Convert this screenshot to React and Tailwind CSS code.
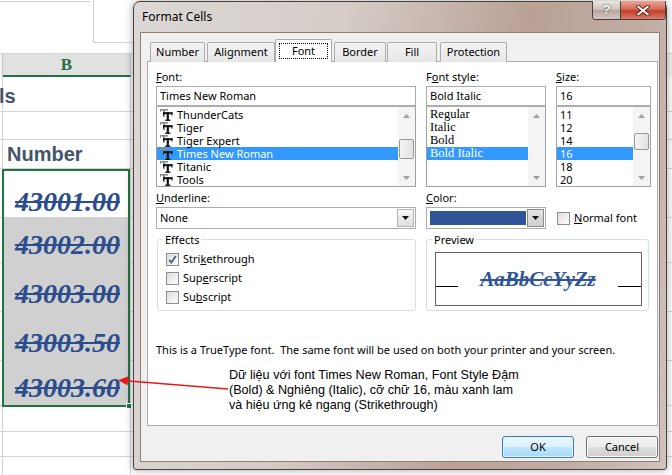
import React from 'react';

const UI = "font-['Noto_Sans',sans-serif] text-[11px] text-black";

//Small drawings
function TTIcon() {
    return (
        <svg width="13" height="12" viewBox="0 0 13 12" className="shrink-0">
            <g fill="#8c8c8c">
                <rect x="0" y="0" width="8" height="1.6" />
                <rect x="0" y="0" width="0.9" height="3" />
                <rect x="3.1" y="0" width="1.8" height="8" />
            </g>
            <g fill="#111">
                <rect x="3" y="3.2" width="9.5" height="2" />
                <rect x="3" y="3.2" width="1" height="3.4" />
                <rect x="11.5" y="3.2" width="1" height="3.4" />
                <rect x="6.7" y="3.2" width="2.2" height="8.2" />
                <rect x="5.2" y="10.6" width="5.2" height="1.3" />
            </g>
        </svg>
    );
}

function Tri({ up, color = "#a0a0a0" }) {
    return (
        <svg width="7" height="4" viewBox="0 0 7 4">
            <path d={up ? "M0 4 L3.5 0 L7 4 Z" : "M0 0 L3.5 4 L7 0 Z"} fill={color} />
        </svg>
    );
}

function ScrollBar({ children }) {
    return (
        <div className="w-[17px] shrink-0 h-full bg-[#f4f4f4] flex flex-col">
            <div className="h-[17px] flex items-center justify-center"><Tri up /></div>
            <div className="flex-1 flex flex-col items-center">{children}</div>
            <div className="h-[17px] flex items-center justify-center"><Tri /></div>
        </div>
    );
}

function Thumb({ className }) {
    return <div className={`w-[15px] rounded-[2px] border border-[#979797] bg-[linear-gradient(90deg,#f4f4f4,#e2e2e2)] ${className}`} />;
}

function DropBtn({ pressed }) {
    return (
        <div className={`w-[17px] h-[18px] mr-[1px] border flex items-center justify-center ${pressed ? "border-[#8a8a8a] bg-[linear-gradient(#e4e4e4,#cfcfcf)]" : "border-[#b5b5b5] bg-[linear-gradient(#f6f6f6,#dedede)]"}`}>
            <Tri color="#111" />
        </div>
    );
}

function Check({ checked }) {
    return (
        <div className="w-[13px] h-[13px] shrink-0 border border-[#8e8f8f] bg-[linear-gradient(135deg,#dcdcdc,#fdfdfd)] flex items-center justify-center">
            {checked && (
                <svg width="9" height="9" viewBox="0 0 9 9">
                    <path d="M1.2 4.8 L3.4 7.4 L7.8 1" stroke="#4a5e8e" strokeWidth="1.8" fill="none" />
                </svg>
            )}
        </div>
    );
}

//Spreadsheet behind the dialog
function Row({ h, fill = "", cls = "", children }) {
    return (
        <div className={`flex border-b border-[#d4d4d4] ${h}`}>
            <div className="w-[3px] shrink-0 border-r border-[#d4d4d4]" />
            <div className={`w-[128px] shrink-0 border-r border-[#d4d4d4] flex ${fill} ${cls}`}>{children}</div>
            <div className="flex-1" />
        </div>
    );
}

function Num({ children }) {
    return (
        <span className="font-['Liberation_Serif',serif] font-bold italic text-[28px] leading-[24px] line-through text-[#2c4d8d]">
            {children}
        </span>
    );
}

function Sheet() {
    return (
        <div className="w-[672px]">
            <div className="flex h-[53px]">
                <div className="w-[90px] h-[1px] mt-[1px] bg-[#d4d4d4]" />
                <div className="ml-[3px] w-[90px] h-[43px] border-l border-b border-[#d4d4d4]" />
            </div>
            <div className="flex h-[24px] border-t border-[#d4d4d4] bg-[#f3f3f3]">
                <div className="w-[3px] shrink-0 border-r border-[#c8c8c8]" />
                <div className="w-[128px] shrink-0 bg-[#e1e1e1] border-b-2 border-b-[#217346] border-r border-r-[#c8c8c8] flex items-center justify-center font-['Liberation_Serif',serif] font-bold text-[17px] text-[#217346]">
                    B
                </div>
            </div>
            <Row h="h-[35px]" cls="items-end pb-[4px]">
                <span className="-ml-[4px] font-['Liberation_Sans',sans-serif] font-bold text-[20px] leading-[22px] text-[#44546a]">ls</span>
            </Row>
            <Row h="h-[28px]" />
            <Row h="h-[29px]" cls="items-end pb-[3px] pl-[4px]">
                <span className="font-['Liberation_Sans',sans-serif] font-bold text-[20px] leading-[22px] text-[#44546a]">Number</span>
            </Row>
            <Row h="h-[49px]" cls="items-end justify-end pr-[10px] pb-[3px]"><Num>43001.00</Num></Row>
            <Row h="h-[45px]" fill="bg-[#d0d0d0]" cls="items-end justify-end pr-[10px] pb-[5px]"><Num>43002.00</Num></Row>
            <Row h="h-[49px]" fill="bg-[#d0d0d0]" cls="items-end justify-end pr-[10px] pb-[5px]"><Num>43003.00</Num></Row>
            <Row h="h-[49px]" fill="bg-[#d0d0d0]" cls="items-end justify-end pr-[10px] pb-[5px]"><Num>43003.50</Num></Row>
            <Row h="h-[45px]" fill="bg-[#d0d0d0]" cls="items-end justify-end pr-[10px] pb-[5px]"><Num>43003.60</Num></Row>
            <Row h="h-[26px]" />
            <Row h="h-[25px]" />
            <Row h="h-[25px]" />
        </div>
    );
}

//Format Cells dialog
function Tab({ w, children }) {
    return (
        <div className={`${w} h-[20px] border border-b-0 border-[#acacac] rounded-t-[2px] bg-[linear-gradient(#f4f4f4,#e6e6e6)] flex items-center justify-center`}>
            {children}
        </div>
    );
}

function Dialog() {
    const fonts = ["ThunderCats", "Tiger", "Tiger Expert", "Times New Roman", "Titanic", "Tools"];
    const styles = ["Regular", "Italic", "Bold", "Bold Italic"];
    const sizes = ["11", "12", "14", "16", "18", "20"];

    return (
        <div className={`absolute left-[133px] top-[1px] w-[534px] h-[469px] ${UI} rounded-t-[7px] rounded-b-[3px] border border-[#4a403c] bg-[linear-gradient(100deg,#dcd8d6_0%,#d5ccc7_35%,#b9a197_65%,#c2aea5_85%,#d0c3bc_100%)] shadow-[0_0_8px_rgba(0,0,0,0.35)] flex flex-col px-[6px] pb-[7px]`}>
            <div className="h-[30px] relative flex items-center pl-[2px]">
                <span className="text-[12px]">Format Cells</span>
                <div className="absolute -top-px -right-[6px] flex h-[19px] rounded-b-[4px] border border-t-0 border-[#4c3f3a] overflow-hidden">
                    <div className="w-[27px] bg-[linear-gradient(#ebe5e2,#cdc1bb_48%,#b5a59e_52%,#d3c7c1)] flex items-center justify-center font-['Liberation_Sans',sans-serif] font-bold text-[13px] text-white [text-shadow:0_0_2px_#2a2a2a]">
                        ?
                    </div>
                    <div className="w-[45px] border-l border-[#4c3f3a] bg-[linear-gradient(#eaa596,#d56b59_45%,#c23f29_55%,#d97b6c)] flex items-center justify-center">
                        <svg width="14" height="11" viewBox="0 0 14 11">
                            <path d="M2 1.5 L12 9.5 M12 1.5 L2 9.5" stroke="#5a1a12" strokeWidth="3.6" strokeLinecap="round" />
                            <path d="M2 1.5 L12 9.5 M12 1.5 L2 9.5" stroke="#fff" strokeWidth="2" strokeLinecap="round" />
                        </svg>
                    </div>
                </div>
            </div>

            <div className="flex-1 bg-[#f0f0f0] border border-[#8d7e76] flex flex-col pt-[5px] pl-[6px] pr-[1px]">
                {/* tabs */}
                <div className="flex items-end h-[24px] -mb-px relative z-10">
                    <div className="ml-[3px]"><Tab w="w-[55px]">Number</Tab></div>
                    <div className="ml-[2px]"><Tab w="w-[68px]">Alignment</Tab></div>
                    <div className="w-[57px] h-[23px] border border-b-0 border-[#acacac] rounded-t-[2px] bg-white flex items-center justify-center">
                        <span className="border border-dotted border-black w-[49px] h-[16px] flex items-center justify-center">Font</span>
                    </div>
                    <div className="ml-[2px]"><Tab w="w-[52px]">Border</Tab></div>
                    <div className="ml-[1px]"><Tab w="w-[50px]">Fill</Tab></div>
                    <div className="ml-[3px]"><Tab w="w-[67px]">Protection</Tab></div>
                </div>

                {/* panel */}
                <div className="h-[365px] bg-white border border-[#acacac] pl-[8px] pt-[7px] flex flex-col">
                    <div className="flex gap-[10px]">
                        {/* font column */}
                        <div className="w-[260px] flex flex-col">
                            <div className="h-[15px] leading-[15px]"><u>F</u>ont:</div>
                            <div className="mt-[2px] h-[20px] border border-[#abadb3] bg-white flex items-center pl-[3px]">Times New Roman</div>
                            <div className="h-[81px] border border-[#9da0a6] border-t-[#abadb3] bg-white flex">
                                <div className="flex-1 pt-[1px]">
                                    {fonts.map((f) => (
                                        <div key={f} className={`h-[13px] flex items-center pl-[3px] ${f === "Times New Roman" ? "bg-[#3399ff] text-white" : ""}`}>
                                            <TTIcon />
                                            <span className="ml-[4px] leading-[13px]">{f}</span>
                                        </div>
                                    ))}
                                </div>
                                <ScrollBar><Thumb className="mt-[15px] h-[20px]" /></ScrollBar>
                            </div>
                            <div className="mt-[3px] h-[15px] leading-[15px]"><u>U</u>nderline:</div>
                            <div className="mt-[2px] h-[22px] border border-[#abadb3] bg-white flex items-center justify-between pl-[3px]">
                                <span>None</span>
                                <DropBtn />
                            </div>
                        </div>

                        {/* style column */}
                        <div className="w-[120px] flex flex-col">
                            <div className="h-[15px] leading-[15px]">F<u>o</u>nt style:</div>
                            <div className="mt-[2px] h-[20px] border border-[#abadb3] bg-white flex items-center pl-[3px]">Bold Italic</div>
                            <div className="h-[81px] border border-[#9da0a6] border-t-[#abadb3] bg-white flex">
                                <div className="flex-1 pt-[1px] font-['Liberation_Serif',serif] text-[12.5px]">
                                    {styles.map((s) => (
                                        <div key={s} className={`h-[13px] leading-[13px] pl-[3px] ${s === "Bold Italic" ? "bg-[#3399ff] text-white" : ""}`}>{s}</div>
                                    ))}
                                </div>
                                <ScrollBar />
                            </div>
                            <div className="mt-[3px] h-[15px] leading-[15px]"><u>C</u>olor:</div>
                            <div className="mt-[2px] h-[22px] border border-[#abadb3] bg-white flex items-center justify-between pl-[3px]">
                                <div className="w-[96px] h-[14px] bg-[#2f5597]" />
                                <DropBtn pressed />
                            </div>
                        </div>

                        {/* size column */}
                        <div className="w-[95px] flex flex-col">
                            <div className="h-[15px] leading-[15px]"><u>S</u>ize:</div>
                            <div className="mt-[2px] h-[20px] border border-[#abadb3] bg-white flex items-center pl-[3px]">16</div>
                            <div className="h-[81px] border border-[#9da0a6] border-t-[#abadb3] bg-white flex">
                                <div className="flex-1 pt-[1px]">
                                    {sizes.map((s) => (
                                        <div key={s} className={`h-[13px] leading-[13px] pl-[3px] ${s === "16" ? "bg-[#3399ff] text-white" : ""}`}>{s}</div>
                                    ))}
                                </div>
                                <ScrollBar><Thumb className="mt-[9px] h-[17px]" /></ScrollBar>
                            </div>
                            <div className="mt-[20px] h-[22px] flex items-center gap-[4px] pl-[1px]">
                                <Check />
                                <span><u>N</u>ormal font</span>
                            </div>
                        </div>
                    </div>

                    <div className="flex gap-[10px] mt-[3px]">
                        <fieldset className="ml-[1px] w-[259px] h-[79px] border border-[#d5dfe5] rounded-[3px] pl-[8px]">
                            <legend className="ml-[-3px] px-[2px] leading-[15px]">Effects</legend>
                            <div className="pt-[3px]">
                                <div className="h-[19px] flex items-center gap-[4px]"><Check checked /><span>Stri<u>k</u>ethrough</span></div>
                                <div className="h-[19px] flex items-center gap-[4px]"><Check /><span>Sup<u>e</u>rscript</span></div>
                                <div className="h-[19px] flex items-center gap-[4px]"><Check /><span>Su<u>b</u>script</span></div>
                            </div>
                        </fieldset>
                        <fieldset className="w-[223px] h-[79px] border border-[#d5dfe5] rounded-[3px] pl-[8px]">
                            <legend className="ml-[-3px] px-[2px] leading-[15px]">Preview</legend>
                            <div className="mt-[5px] w-[207px] h-[54px] border border-[#646464] bg-white flex items-start">
                                <div className="w-[22px] h-px mt-[33px] bg-black" />
                                <div className="flex-1 flex justify-center mt-[14px]">
                                    <span className="font-['Liberation_Serif',serif] font-bold italic text-[21px] leading-[24px] line-through text-[#2f5597]">AaBbCcYyZz</span>
                                </div>
                                <div className="w-[23px] h-px mt-[33px] bg-black" />
                            </div>
                        </fieldset>
                    </div>

                    <div className="mt-[31px] leading-[15px] whitespace-pre">This is a TrueType font.  The same font will be used on both your printer and your screen.</div>
                </div>

                {/* buttons */}
                <div className="mt-[10px] flex justify-end gap-[12px]">
                    <div className="w-[72px] h-[22px] rounded-[3px] border border-[#3c7fb1] bg-[linear-gradient(#eaf6fd,#d9f0fc_50%,#bee6fd_51%,#a7d9f5)] shadow-[inset_0_0_0_1px_#dff2fc] flex items-center justify-center">OK</div>
                    <div className="w-[72px] h-[22px] rounded-[3px] border border-[#707070] bg-[linear-gradient(#f2f2f2,#ebebeb_50%,#dddddd_51%,#cfcfcf)] shadow-[inset_0_0_0_1px_#fcfcfc] flex items-center justify-center">Cancel</div>
                </div>
            </div>
        </div>
    );
}

function Annotation() {
    return (
        <>
            <svg className="absolute left-0 top-0 pointer-events-none" width="672" height="475" viewBox="0 0 672 475">
                <line x1="126" y1="380.8" x2="228" y2="389" stroke="#e3191b" strokeWidth="1.6" />
                <polygon points="118,380.3 128.5,376.2 127.5,385.2" fill="#e3191b" />
            </svg>
            <div className="absolute left-[229px] top-[368px] font-['Liberation_Sans',sans-serif] text-[12.6px] leading-[15px] text-black">
                <div>Dữ liệu với font Times New Roman, Font Style Đậm</div>
                <div>(Bold) &amp; Nghiêng (Italic), cỡ chữ 16, màu xanh lam</div>
                <div>và hiệu ứng kẻ ngang (Strikethrough)</div>
            </div>
        </>
    );
}

export default function App() {
    return (
        <div className="relative w-[672px] h-[475px] overflow-hidden bg-white">
            <Sheet />
            {/* selection rectangle and fill handle */}
            <div className="absolute left-[2px] top-[169px] w-[128px] h-[238px] border-2 border-[#217346]" />
            <div className="absolute left-[126px] top-[403px] w-[6px] h-[6px] bg-[#217346] border border-white" />
            <Dialog />
            <Annotation />
        </div>
    );
}
